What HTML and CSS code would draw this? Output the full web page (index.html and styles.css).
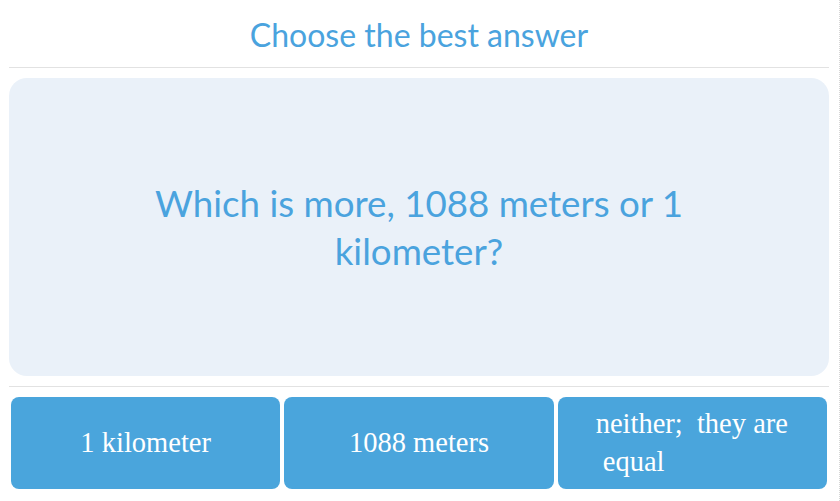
FILE: index.html
```html
<html>

<head>
    <title>Quiz</title>
    <link rel="stylesheet" href="styles.css">
</head>

<body>
    <div class="page">
        <h3 class="title">Choose the best answer</h3>
        <div class="question">
            <p>Which is more, 1088 meters or 1 kilometer?</p>
        </div>
        <div class="answers">
            <div class="answerBtn"><span>1 kilometer</span></div>
            <div class="answerBtn"><span>1088 meters</span></div>
            <div class="answerBtn"><span>neither;&nbsp; they are &nbsp;equal</span></div>
        </div>
    </div>
</body>

</html>
```

FILE: styles.css
```css
body {
    margin: 0;
    background: #fff;
}

.page {
    width: 820px;
    height: 501px;
    padding: 0 10px 0 9px;
    border-right: 1px dotted #d6d6d6;
    box-sizing: content-box;
    font-family: Lato, "Open Sans", sans-serif;
}

.title {
    margin: 0;
    height: 67px;
    line-height: 70px;
    text-align: center;
    font-size: 32px;
    font-weight: normal;
    color: #4aa3de;
    border-bottom: 1px solid #e2e2e2;
}

.question {
    margin: 10px 0;
    height: 298px;
    background: #eaf1f9;
    border-radius: 18px;
    display: flex;
    align-items: center;
    justify-content: center;
}

.question p {
    margin: 0;
    width: 560px;
    text-align: center;
    font-size: 36.7px;
    line-height: 48px;
    color: #4aa3de;
}

.answers {
    border-top: 1px solid #e2e2e2;
    padding: 10px 2px 0 2px;
    display: flex;
    gap: 4px;
}

.answerBtn {
    flex: 1;
    height: 92px;
    padding: 0 38px;
    box-sizing: border-box;
    background: #4aa5dc;
    border-radius: 8px;
    display: flex;
    align-items: center;
    justify-content: center;
    font-family: "Liberation Serif", serif;
    font-size: 28.5px;
    line-height: 38px;
    color: #fff;
}
```
